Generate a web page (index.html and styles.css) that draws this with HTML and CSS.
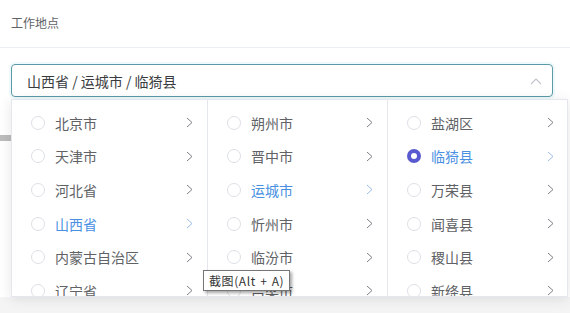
FILE: index.html
```html
<!DOCTYPE html>
<html>
  <head>
    <meta charset="utf-8" />
    <title>工作地点</title>
    <link rel="stylesheet" href="styles.css">
  </head>
  <body>
    <div class="form-head">工作地点</div>
    <div class="form-body">
      <div class="cascader">
        <div class="cascader-input">
          <span>山西省 / 运城市 / 临猗县</span>
          <svg class="arrow-up" width="12" height="8" viewBox="0 0 12 8"><polyline points="1,7 6,2 11,7" fill="none" stroke="#c0c4cc" stroke-width="1.1"/></svg>
        </div>
        <div class="cascader-panel">
          <ul class="menu menu-wide">
            <li class="item"><i class="radio"></i><span class="label">北京市</span><svg class="chev" width="7" height="11" viewBox="0 0 7 11"><polyline points="1,1 6,5.5 1,10" fill="none" stroke="#7d8088" stroke-width="1"/></svg></li>
            <li class="item"><i class="radio"></i><span class="label">天津市</span><svg class="chev" width="7" height="11" viewBox="0 0 7 11"><polyline points="1,1 6,5.5 1,10" fill="none" stroke="#7d8088" stroke-width="1"/></svg></li>
            <li class="item"><i class="radio"></i><span class="label">河北省</span><svg class="chev" width="7" height="11" viewBox="0 0 7 11"><polyline points="1,1 6,5.5 1,10" fill="none" stroke="#7d8088" stroke-width="1"/></svg></li>
            <li class="item active"><i class="radio"></i><span class="label">山西省</span><svg class="chev" width="7" height="11" viewBox="0 0 7 11"><polyline points="1,1 6,5.5 1,10" fill="none" stroke="#9dbce8" stroke-width="1"/></svg></li>
            <li class="item"><i class="radio"></i><span class="label">内蒙古自治区</span><svg class="chev" width="7" height="11" viewBox="0 0 7 11"><polyline points="1,1 6,5.5 1,10" fill="none" stroke="#7d8088" stroke-width="1"/></svg></li>
            <li class="item"><i class="radio"></i><span class="label">辽宁省</span><svg class="chev" width="7" height="11" viewBox="0 0 7 11"><polyline points="1,1 6,5.5 1,10" fill="none" stroke="#7d8088" stroke-width="1"/></svg></li>
          </ul>
          <ul class="menu">
            <li class="item"><i class="radio"></i><span class="label">朔州市</span><svg class="chev" width="7" height="11" viewBox="0 0 7 11"><polyline points="1,1 6,5.5 1,10" fill="none" stroke="#7d8088" stroke-width="1"/></svg></li>
            <li class="item"><i class="radio"></i><span class="label">晋中市</span><svg class="chev" width="7" height="11" viewBox="0 0 7 11"><polyline points="1,1 6,5.5 1,10" fill="none" stroke="#7d8088" stroke-width="1"/></svg></li>
            <li class="item active"><i class="radio"></i><span class="label">运城市</span><svg class="chev" width="7" height="11" viewBox="0 0 7 11"><polyline points="1,1 6,5.5 1,10" fill="none" stroke="#9dbce8" stroke-width="1"/></svg></li>
            <li class="item"><i class="radio"></i><span class="label">忻州市</span><svg class="chev" width="7" height="11" viewBox="0 0 7 11"><polyline points="1,1 6,5.5 1,10" fill="none" stroke="#7d8088" stroke-width="1"/></svg></li>
            <li class="item"><i class="radio"></i><span class="label">临汾市</span><svg class="chev" width="7" height="11" viewBox="0 0 7 11"><polyline points="1,1 6,5.5 1,10" fill="none" stroke="#7d8088" stroke-width="1"/></svg></li>
            <li class="item"><i class="radio"></i><span class="label">吕梁市</span><svg class="chev" width="7" height="11" viewBox="0 0 7 11"><polyline points="1,1 6,5.5 1,10" fill="none" stroke="#7d8088" stroke-width="1"/></svg></li>
          </ul>
          <ul class="menu">
            <li class="item"><i class="radio"></i><span class="label">盐湖区</span><svg class="chev" width="7" height="11" viewBox="0 0 7 11"><polyline points="1,1 6,5.5 1,10" fill="none" stroke="#7d8088" stroke-width="1"/></svg></li>
            <li class="item active"><i class="radio checked"></i><span class="label">临猗县</span><svg class="chev" width="7" height="11" viewBox="0 0 7 11"><polyline points="1,1 6,5.5 1,10" fill="none" stroke="#9dbce8" stroke-width="1"/></svg></li>
            <li class="item"><i class="radio"></i><span class="label">万荣县</span><svg class="chev" width="7" height="11" viewBox="0 0 7 11"><polyline points="1,1 6,5.5 1,10" fill="none" stroke="#7d8088" stroke-width="1"/></svg></li>
            <li class="item"><i class="radio"></i><span class="label">闻喜县</span><svg class="chev" width="7" height="11" viewBox="0 0 7 11"><polyline points="1,1 6,5.5 1,10" fill="none" stroke="#7d8088" stroke-width="1"/></svg></li>
            <li class="item"><i class="radio"></i><span class="label">稷山县</span><svg class="chev" width="7" height="11" viewBox="0 0 7 11"><polyline points="1,1 6,5.5 1,10" fill="none" stroke="#7d8088" stroke-width="1"/></svg></li>
            <li class="item"><i class="radio"></i><span class="label">新绛县</span><svg class="chev" width="7" height="11" viewBox="0 0 7 11"><polyline points="1,1 6,5.5 1,10" fill="none" stroke="#7d8088" stroke-width="1"/></svg></li>
          </ul>
        </div>
      </div>
      <div class="under-bar"></div>
    </div>
    <div class="page-foot"></div>
    <div class="tooltip">截图(Alt + A)</div>
  </body>
</html>
```
FILE: styles.css
```css
html, body {
  margin: 0;
  padding: 0;
}
body {
  width: 570px;
  height: 313px;
  overflow: hidden;
  background: #ffffff;
  font-family: "Noto Sans CJK SC", "Noto Sans", sans-serif;
  color: #606266;
  position: relative;
}
.form-head {
  height: 48px;
  box-sizing: border-box;
  padding: 14px 0 0 11px;
  font-size: 12px;
  line-height: 18px;
  color: #606266;
  border-bottom: 1px solid #ebeef5;
}
.form-body {
  height: 249px;
  padding: 16px 17px 0 11px;
  box-sizing: border-box;
}
.cascader {
  position: relative;
}
.cascader-input {
  height: 33px;
  box-sizing: border-box;
  border: 1px solid #5b9aa6;
  border-radius: 4px;
  box-shadow: 0 0 0 2px #eef9fb;
  display: flex;
  align-items: center;
  justify-content: space-between;
  padding: 0 10px 0 15px;
  font-size: 14px;
  color: #3a3b3e;
}
.arrow-up {
  margin-top: 1px;
}
.cascader-panel {
  position: absolute;
  z-index: 2;
  top: 35px;
  left: 0;
  width: 557px;
  height: 198px;
  box-sizing: border-box;
  display: flex;
  background: #fff;
  border: 1px solid #e4e7ed;
  box-shadow: 0 2px 12px rgba(0, 0, 0, 0.1);
  overflow: hidden;
}
.menu {
  list-style: none;
  margin: 0;
  padding: 6px 0 0;
  width: 180px;
  flex-shrink: 0;
  border-right: 1px solid #e4e7ed;
  box-sizing: border-box;
}
.menu-wide {
  width: 196px;
}
.menu:last-child {
  border-right: none;
}
.item {
  height: 33.6px;
  display: flex;
  align-items: center;
  padding: 0 14px 0 19px;
  font-size: 14px;
  color: #606266;
}
.item.active {
  color: #4a90e2;
}
.radio {
  width: 14px;
  height: 14px;
  box-sizing: border-box;
  border: 1px solid #dcdfe6;
  border-radius: 50%;
  flex-shrink: 0;
  margin-right: 10px;
}
.radio.checked {
  border: 4px solid #5a5ad0;
  background: #fff;
}
.label {
  flex: 1;
}
.chev {
  flex-shrink: 0;
}
.under-bar {
  width: 11px;
  height: 6px;
  margin: 38px 0 0 -11px;
  background: #bcbcbc;
}
.page-foot {
  height: 18px;
  background: #f4f4f4;
}
.tooltip {
  position: absolute;
  z-index: 5;
  left: 203px;
  top: 270px;
  height: 21px;
  box-sizing: border-box;
  padding: 0 5px;
  border: 1px solid #767676;
  background: #fff;
  font-size: 12px;
  line-height: 19px;
  letter-spacing: 0.6px;
  word-spacing: 1px;
  color: #333;
  box-shadow: 2px 2px 3px rgba(0, 0, 0, 0.35);
}
```
